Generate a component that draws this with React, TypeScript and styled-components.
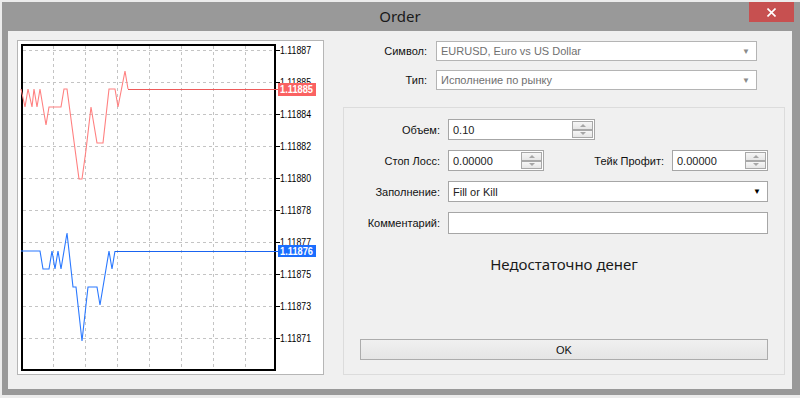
import React from 'react'
import styled, { createGlobalStyle } from 'styled-components'

const GlobalStyle = createGlobalStyle`
  html, body {
    margin: 0;
    padding: 0;
    background: #ececec;
    overflow: hidden;
  }
  body {
    font-family: "Liberation Sans", Arial, sans-serif;
  }
`

// chart data, in page pixels (svg viewBox is offset to match)
const gridX = [53, 85, 117, 149, 181, 213, 245]
const gridY = [50, 82, 114, 146, 178, 210, 242, 274, 306, 338]
const prices = ['1.11887', '1.11885', '1.11884', '1.11882', '1.11880', '1.11878', '1.11877', '1.11875', '1.11873', '1.11871']

const askLine = '21,89 25,107 28,89 32,107 34,89 37,107 40,89 46,125 49,107 61,107 64,89 67,89 79,179 82,179 86,150 91,107 97,143 103,143 109,89 115,89 118,107 125,71 128,89'
const bidLine = '21,251 40,251 43,269 49,269 52,251 55,269 58,251 61,269 64,251 67,233 73,287 76,287 82,341 88,287 97,287 100,305 109,251 112,269 115,251'

const axisFont = '"Liberation Sans", Arial, sans-serif'

const Chart = () => (
  <ChartFrame>
    <svg width="305" height="333" viewBox="18 41 305 333" style={{ display: 'block' }}>
      {gridX.map((x) => (
        <line key={'v' + x} x1={x + 0.5} y1={46} x2={x + 0.5} y2={369} stroke="#c4c4c4" strokeDasharray="3 3" />
      ))}
      {gridY.map((y) => (
        <line key={'h' + y} x1={23} y1={y + 0.5} x2={274} y2={y + 0.5} stroke="#c4c4c4" strokeDasharray="3 3" />
      ))}
      <rect x={22} y={45} width={253} height={325} fill="none" stroke="#000" strokeWidth={2} />
      {gridY.map((y, i) => (
        <g key={'t' + y}>
          <line x1={276} y1={y + 0.5} x2={280} y2={y + 0.5} stroke="#000" />
          <text x={280} y={y + 4} fontSize="11" fill="#000" fontFamily={axisFont} textLength={31} lengthAdjust="spacingAndGlyphs">
            {prices[i]}
          </text>
        </g>
      ))}
      <polyline points={askLine} fill="none" stroke="#ff8080" strokeWidth={1.1} />
      <line x1={128} y1={89.5} x2={278} y2={89.5} stroke="#ee5a5a" />
      <polyline points={bidLine} fill="none" stroke="#2a78ff" strokeWidth={1.1} />
      <line x1={115} y1={251.5} x2={278} y2={251.5} stroke="#1a64f0" />
      <rect x={278} y={83} width={38} height={13} fill="#fa6262" />
      <text x={280} y={93} fontSize="11" fontWeight="bold" fill="#fff" fontFamily={axisFont} textLength={33} lengthAdjust="spacingAndGlyphs">
        1.11885
      </text>
      <rect x={278} y={245} width={38} height={12} fill="#1a6eff" />
      <text x={280} y={255} fontSize="11" fontWeight="bold" fill="#fff" fontFamily={axisFont} textLength={33} lengthAdjust="spacingAndGlyphs">
        1.11876
      </text>
    </svg>
  </ChartFrame>
)

const SpinBox = () => (
  <Spinner>
    <SpinHalf><Arrow $up /></SpinHalf>
    <SpinHalf><Arrow /></SpinHalf>
  </Spinner>
)

const App = () => {
  return (
    <>
      <GlobalStyle />
      <Window>
        <TitleBar>
          <Title>Order</Title>
          <CloseButton>
            <svg width="9" height="9" viewBox="0 0 9 9">
              <path d="M0.5 0.5 L8.5 8.5 M8.5 0.5 L0.5 8.5" stroke="#fff" strokeWidth="1.6" />
            </svg>
          </CloseButton>
        </TitleBar>
        <Client>
          <Chart />
          <RightColumn>
            <TopRow>
              <Label $w={84} $gap={9}>Символ:</Label>
              <Field $grow $muted>
                EURUSD, Euro vs US Dollar
                <DropArrow $muted>▼</DropArrow>
              </Field>
            </TopRow>
            <TopRow>
              <Label $w={84} $gap={9}>Тип:</Label>
              <Field $grow $muted>
                Исполнение по рынку
                <DropArrow $muted>▼</DropArrow>
              </Field>
            </TopRow>
            <Group>
              <Row>
                <Label $w={96} $gap={8}>Объем:</Label>
                <Field $w={147}>
                  0.10
                  <SpinBox />
                </Field>
              </Row>
              <Row>
                <Label $w={96} $gap={8}>Стоп Лосс:</Label>
                <Field $w={96} $muted>
                  0.00000
                  <SpinBox />
                </Field>
                <PushRight>
                  <Label $gap={8}>Тейк Профит:</Label>
                  <Field $w={96} $muted>
                    0.00000
                    <SpinBox />
                  </Field>
                </PushRight>
              </Row>
              <Row>
                <Label $w={96} $gap={8}>Заполнение:</Label>
                <Field $grow>
                  Fill or Kill
                  <DropArrow>▼</DropArrow>
                </Field>
              </Row>
              <Row>
                <Label $w={96} $gap={8}>Комментарий:</Label>
                <Field $grow $h={22} />
              </Row>
              <Message>Недостаточно денег</Message>
              <OkButton>OK</OkButton>
            </Group>
          </RightColumn>
        </Client>
      </Window>
    </>
  )
}

export default App

const Window = styled.div`
    margin: 2px 0 0 2px;
    width: 798px;
    height: 393px;
    box-sizing: border-box;
    background: #999999;
    padding: 0 8px 6px 6px;
    display: flex;
    flex-direction: column;
`
const TitleBar = styled.div`
    height: 29px;
    display: grid;
    grid-template-columns: 1fr auto 1fr;
    align-items: start;
`
const Title = styled.div`
    grid-column: 2;
    line-height: 29px;
    font-family: "Noto Sans", "Open Sans", sans-serif;
    font-size: 15px;
    color: #1a1a1a;
`
const CloseButton = styled.div`
    grid-column: 3;
    justify-self: end;
    margin-right: -2px;
    width: 45px;
    height: 20px;
    background: #c75050;
    display: flex;
    align-items: center;
    justify-content: center;
`
const Client = styled.div`
    flex: 1;
    background: #f0f0f0;
    display: flex;
    align-items: flex-start;
    padding: 9px 7px 0 9px;
`
const ChartFrame = styled.div`
    width: 307px;
    height: 335px;
    box-sizing: border-box;
    border: 1px solid #b6b6b6;
    background: #fff;
`
const RightColumn = styled.div`
    margin-left: 19px;
    width: 442px;
    padding-top: 1px;
    display: flex;
    flex-direction: column;
`
const TopRow = styled.div`
    display: flex;
    align-items: center;
    height: 20px;
    margin-bottom: 9px;
    padding-right: 28px;
`
const Row = styled.div`
    display: flex;
    align-items: center;
    margin-bottom: 10px;
`
const PushRight = styled.div`
    margin-left: auto;
    display: flex;
    align-items: center;
`
const Label = styled.span<{ $w?: number; $gap: number }>`
    ${(p) => (p.$w ? `width: ${p.$w}px;` : '')}
    flex-shrink: 0;
    margin-right: ${(p) => p.$gap}px;
    text-align: right;
    font-size: 11px;
    color: #111;
`
const Field = styled.div<{ $w?: number; $h?: number; $grow?: boolean; $muted?: boolean }>`
    ${(p) => (p.$w ? `width: ${p.$w}px;` : '')}
    ${(p) => (p.$grow ? 'flex: 1;' : '')}
    height: ${(p) => p.$h || (p.$grow && p.$muted ? 20 : 21)}px;
    box-sizing: border-box;
    border: 1px solid ${(p) => (p.$muted && p.$grow ? '#b4b4b4' : '#a6a6a6')};
    background: #fff;
    display: flex;
    align-items: center;
    padding-left: 4px;
    font-size: 11px;
    color: ${(p) => (p.$muted && p.$grow ? '#707070' : '#222')};
`
const DropArrow = styled.span<{ $muted?: boolean }>`
    margin-left: auto;
    margin-right: 6px;
    font-size: 8px;
    color: ${(p) => (p.$muted ? '#8a8a8a' : '#000')};
`
const Spinner = styled.div`
    margin-left: auto;
    margin-right: 1px;
    width: 21px;
    height: 17px;
    display: flex;
    flex-direction: column;
`
const SpinHalf = styled.div`
    flex: 1;
    box-sizing: border-box;
    border: 1px solid #a8a8a8;
    background: linear-gradient(#f6f6f6, #e6e6e6);
    display: flex;
    align-items: center;
    justify-content: center;
`
const Arrow = styled.span<{ $up?: boolean }>`
    width: 0;
    height: 0;
    border-left: 3px solid transparent;
    border-right: 3px solid transparent;
    ${(p) => (p.$up ? 'border-bottom: 3px solid #a6a6a6;' : 'border-top: 3px solid #a6a6a6;')}
`
const Group = styled.div`
    margin-top: 8px;
    height: 268px;
    box-sizing: border-box;
    border: 1px solid #dcdcdc;
    padding: 11px 16px 14px 0;
    display: flex;
    flex-direction: column;
`
const Message = styled.div`
    flex: 1;
    padding-top: 10px;
    text-align: center;
    line-height: 20px;
    font-family: "Noto Sans", "Open Sans", sans-serif;
    font-size: 15px;
    color: #1a1a1a;
    padding-left: 16px;
`
const OkButton = styled.div`
    margin-left: 16px;
    height: 21px;
    box-sizing: border-box;
    border: 1px solid #acacac;
    background: linear-gradient(#f0f0f0, #e5e5e5);
    display: flex;
    align-items: center;
    justify-content: center;
    font-size: 11px;
    color: #111;
`
